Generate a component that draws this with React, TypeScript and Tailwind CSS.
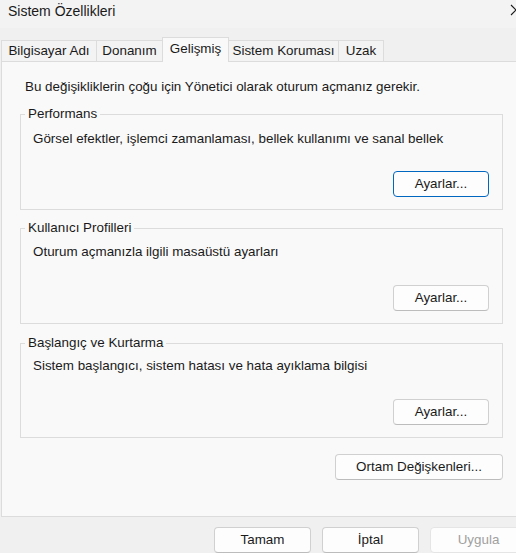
import React from "react"

const tabs = [
  { label: "Bilgisayar Adı", width: "w-[96px]" },
  { label: "Donanım", width: "w-[67px]" },
  { label: "Gelişmiş", width: "w-[67px]", active: true },
  { label: "Sistem Koruması", width: "w-[111px]" },
  { label: "Uzak", width: "w-[46px]" },
]

function WinButton({
  children,
  className = "",
  focused = false,
  disabled = false,
}: {
  children: React.ReactNode
  className?: string
  focused?: boolean
  disabled?: boolean
}) {
  const border = focused
    ? "border-[#0067c0]"
    : disabled
      ? "border-[#e5e5e5] bg-[#f5f5f5] text-[#a0a0a0]"
      : "border-[#d0d0d0] border-b-[#bcbcbc]"
  return (
    <button
      type="button"
      className={`h-[26px] flex items-center justify-center rounded-[4px] border bg-[#fdfdfd] text-[13.4px] leading-[16px] ${border} ${className}`}
    >
      {children}
    </button>
  )
}

function Group({
  title,
  text,
  focused = false,
  pt = "pt-[8px]",
  gap = "mt-[25px]",
  className = "",
}: {
  title: string
  text: string
  focused?: boolean
  pt?: string
  gap?: string
  className?: string
}) {
  return (
    <fieldset className={`border border-[#dcdcdc] ${className}`}>
      <legend className="ml-[4px] px-[3px] leading-[16px]">{title}</legend>
      <div className={`flex flex-col pl-[12px] pr-[13px] pb-[12px] ${pt}`}>
        <p className="leading-[16px]">{text}</p>
        <div className={`flex justify-end ${gap}`}>
          <WinButton focused={focused} className="w-[96px]">
            Ayarlar...
          </WinButton>
        </div>
      </div>
    </fieldset>
  )
}

export default function App() {
  return (
    <div className="w-[516px] h-[553px] overflow-hidden bg-[#f0f0f0] text-[13.4px] text-[#1a1a1a] font-['Segoe_UI','Liberation_Sans',Arial,sans-serif]">
      {/* title bar */}
      <div className="h-[28px] flex items-start bg-[#f3f3f3]">
        <span className="pl-[8px] pt-[3px] text-[14px] leading-[17px]">Sistem Özellikleri</span>
        <svg className="ml-auto -mr-[6px] mt-[4px]" width="12" height="12" viewBox="0 0 12 12">
          <path d="M1 1 L11 11 M11 1 L1 11" stroke="#1a1a1a" strokeWidth="1.1" fill="none" />
        </svg>
      </div>

      {/* tabs */}
      <div className="h-[33px] flex items-end pl-[1px]">
        {tabs.map((t, i) =>
          t.active ? (
            <div
              key={t.label}
              className={`relative z-10 -mb-px h-[25px] -ml-px flex justify-center pt-[3px] leading-[16px] border border-b-0 border-[#dcdcdc] bg-[#f9f9f9] ${t.width}`}
            >
              {t.label}
            </div>
          ) : (
            <div
              key={t.label}
              className={`h-[21px] flex items-center justify-center leading-[16px] border border-b-0 border-[#dcdcdc] bg-[#f3f3f3] ${i > 0 ? "-ml-px" : ""} ${t.width}`}
            >
              {t.label}
            </div>
          ),
        )}
      </div>

      {/* panel */}
      <div className="ml-[1px] w-[530px] h-[456px] border border-[#dcdcdc] bg-[#f9f9f9] pt-[17px]">
        <div className="ml-[18px] w-[483px] flex flex-col">
          <p className="pl-[5px] leading-[16px]">
            Bu değişikliklerin çoğu için Yönetici olarak oturum açmanız gerekir.
          </p>
          <Group
            className="mt-[11px]"
            pt="pt-[9px]"
            gap="mt-[24px]"
            focused
            title="Performans"
            text="Görsel efektler, işlemci zamanlaması, bellek kullanımı ve sanal bellek"
          />
          <Group
            className="mt-[10px]"
            title="Kullanıcı Profilleri"
            text="Oturum açmanızla ilgili masaüstü ayarları"
          />
          <Group
            className="mt-[11px]"
            pt="pt-[7px]"
            title="Başlangıç ve Kurtarma"
            text="Sistem başlangıcı, sistem hatası ve hata ayıklama bilgisi"
          />
          <div className="flex justify-end mt-[16px]">
            <WinButton className="w-[168px]">Ortam Değişkenleri...</WinButton>
          </div>
        </div>
      </div>

      {/* dialog buttons */}
      <div className="flex gap-[11px] pl-[214px] mt-[10px]">
        <WinButton className="w-[97px] shrink-0">Tamam</WinButton>
        <WinButton className="w-[97px] shrink-0">İptal</WinButton>
        <WinButton disabled className="w-[97px] shrink-0">
          Uygula
        </WinButton>
      </div>
    </div>
  )
}
